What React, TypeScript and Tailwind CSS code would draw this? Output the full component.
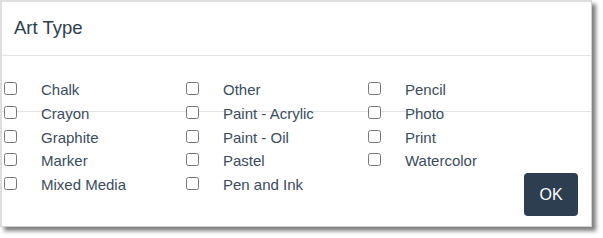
import React from "react";

const columns: string[][] = [
  ["Chalk", "Crayon", "Graphite", "Marker", "Mixed Media"],
  ["Other", "Paint - Acrylic", "Paint - Oil", "Pastel", "Pen and Ink"],
  ["Pencil", "Photo", "Print", "Watercolor"],
];

function Item({ label }: { label: string }) {
  return (
    <label className="flex items-start h-[23.75px]">
      <input type="checkbox" className="m-0 mt-[4px] w-[13px] h-[13px] shrink-0" />
      <span className="ml-[24px] text-[15px] leading-[23.75px] text-[#3a4c5e] whitespace-nowrap">
        {label}
      </span>
    </label>
  );
}

export default function App() {
  return (
    <div className="w-[603px] h-[238px] bg-white" style={{ fontFamily: '"Liberation Sans", Arial, sans-serif' }}>
      <div className="relative w-[592px] h-[227px] bg-white border border-[#d0d0d0] border-t-2 border-l-2 border-t-[#dedede] border-l-[#dedede] shadow-[4px_4px_4px_rgba(0,0,0,0.5)] flex flex-col">
        <div className="absolute left-0 right-0 top-[109px] h-px bg-[#e3e3e3] pointer-events-none" />
        <div className="relative h-[54px] border-b border-[#e5e5e5] pl-[12px] pt-[16px] shrink-0">
          <h1 className="text-[18.5px] leading-[20px] text-[#2c3e50]">Art Type</h1>
        </div>
        <div className="relative flex-1 flex">
          <div className="grid grid-cols-[182px_182px_150px] pt-[22px] pl-[2px] content-start">
            {columns.map((col, i) => (
              <div key={i} className="flex flex-col">
                {col.map((l) => (
                  <Item key={l} label={l} />
                ))}
              </div>
            ))}
          </div>
          <button className="ml-auto self-end mb-[10px] mr-[13px] w-[54px] h-[43px] rounded-[4px] bg-[#2c3e50] text-white text-[16px]">
            OK
          </button>
        </div>
      </div>
    </div>
  );
}
